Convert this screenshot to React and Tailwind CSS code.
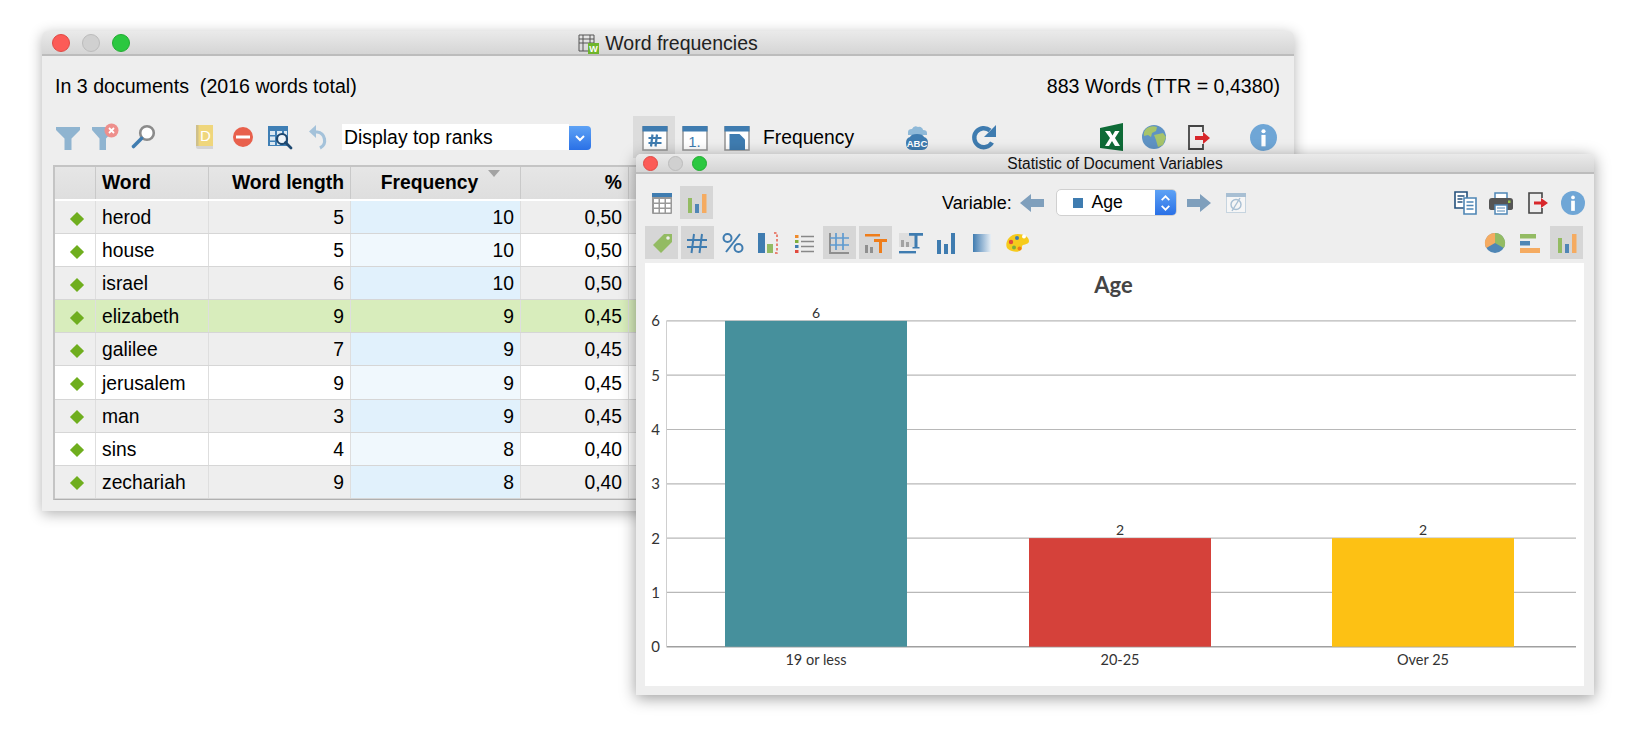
const sans = "font-['Liberation_Sans',Arial,sans-serif]";

function Icon({ children, w = 30, h = 30, className = "" }) {
  return (
    <svg width={w} height={h} viewBox={`0 0 ${w} ${h}`} className={`shrink-0 ${className}`}>
      {children}
    </svg>
  );
}

const Funnel = () => (
  <Icon><path d="M3 5h24v3l-8.500 8.500V28h-7V16.500L3 8z" fill="#8fb4d0" /></Icon>
);

const FunnelX = () => (
  <Icon>
    <path d="M2 5h22v3l-8 8.500V28h-6.500V16.500L2 8z" fill="#8fb4d0" />
    <circle cx="21.500" cy="8.500" r="7" fill="#ee8f8c" />
    <path d="M19 6l5 5m0-5l-5 5" stroke="#fff" strokeWidth="1.800" />
  </Icon>
);

const Magnifier = () => (
  <Icon>
    <circle cx="19" cy="11" r="6.800" fill="#fff" stroke="#8b8b8b" strokeWidth="2.600" />
    <path d="M13.500 16.500L5.500 24.500" stroke="#3f7cb0" strokeWidth="3.600" strokeLinecap="round" />
  </Icon>
);

const Book = () => (
  <Icon>
    <path d="M8 3h16v21H8z" fill="#efd67c" />
    <path d="M7 24h17v3H9q-2 0-2-2z" fill="#d4d4d4" />
    <path d="M7 3h2.500v21H7z" fill="#cfc08a" />
    <text x="16.500" y="19" fontSize="15" fill="#fff" textAnchor="middle" fontFamily="Liberation Sans">D</text>
  </Icon>
);

const MinusCircle = () => (
  <Icon>
    <circle cx="15" cy="15" r="10" fill="#e8604c" />
    <rect x="8" y="13.500" width="14" height="3" fill="#fff" />
  </Icon>
);

const TableSearch = () => (
  <Icon>
    <path d="M4 4h20v20H4z" fill="#3f7fb5" />
    <path d="M6 9h5v4H6zm7 0h5v4h-5zm7 0h3v4h-3zM6 14.500h5v4H6zm0 5.500h5v3H6zm7 0h3v3h-3z" fill="#dbe8f2" />
    <circle cx="18" cy="17" r="5" fill="#eef4f9" stroke="#1e4870" strokeWidth="2.200" />
    <path d="M21.500 20.500L27 26" stroke="#1e4870" strokeWidth="2.800" strokeLinecap="round" />
  </Icon>
);

const Undo = () => (
  <Icon>
    <path d="M13 10h3a8.500 8.500 0 0 1 3 16" fill="none" stroke="#a4c2da" strokeWidth="3.200" />
    <path d="M15 3v13L8 9.500z" fill="#a4c2da" />
  </Icon>
);

const TableMode = ({ children }) => (
  <Icon>
    <rect x="4" y="5" width="24" height="23" fill="#fff" stroke="#9a9a9a" strokeWidth="1.600" />
    <rect x="3.500" y="4" width="25" height="5.500" fill="#3f7cb0" />
    {children}
  </Icon>
);

const CloudAbc = () => (
  <Icon>
    <path d="M6 10q0-3 4-3 2-4 6-2 2-1 4 1 1 1 1 2 4 0 4 3v2H6z" fill="#8fb9d8" />
    <path d="M4 21q0-5 4-6 1-3 7-3t7 3q4 1 4 6 0 7-6 7H10q-6 0-6-7z" fill="#3f7cb0" />
    <text x="15" y="24.500" fontSize="9.500" fontWeight="700" fill="#fff" textAnchor="middle" fontFamily="Liberation Sans">ABC</text>
  </Icon>
);

const Refresh = () => (
  <Icon>
    <path d="M23 20.500a9.500 9.500 0 1 1-2-12" fill="none" stroke="#3f7cb0" strokeWidth="4.400" />
    <path d="M27 3v12H15z" fill="#3f7cb0" />
  </Icon>
);

const Excel = () => (
  <Icon>
    <path d="M3 6l23-5v28L3 26z" fill="#0e6b37" />
    <path d="M8 9h5l2.500 4.500L18 9h4.500l-4.500 7 5 8h-5l-3-5-3 5H8l5-8z" fill="#fff" />
  </Icon>
);

const Globe = () => (
  <Icon>
    <circle cx="15" cy="15" r="12" fill="#5f93c4" />
    <path d="M8 6q5-3 10-1l-1 4-4 2-1 4-3-2-4 1q-1-5 3-8zM15 13l9-2 3 4-3 8-5 2-2-7z" fill="#a7c46a" />
  </Icon>
);

const ExitIcon = () => (
  <Icon>
    <path d="M20 10V4H6v23h14v-5" fill="none" stroke="#444" strokeWidth="1.800" />
    <path d="M12 14h8v-4l7 6-7 6v-4h-8z" fill="#d8272b" />
  </Icon>
);

const Info = ({ size = 27 }) => (
  <svg width={size} height={size} viewBox="0 0 26 26" className="shrink-0">
    <circle cx="13" cy="13" r="13" fill="#6fa6d6" />
    <circle cx="13" cy="7" r="2" fill="#fff" />
    <rect x="11" y="10.500" width="4" height="11" fill="#fff" />
  </svg>
);

const Diamond = () => <div className="w-[10px] h-[10px] rotate-45 bg-[#6fae1e]" />;

const Stepper = ({ double }) => (
  <svg width="22" height="26" viewBox="0 0 22 26">
    {double ? (
      <path d="M7 10l4-4 4 4M7 16l4 4 4-4" fill="none" stroke="#fff" strokeWidth="1.800" />
    ) : (
      <path d="M7 11l4 4 4-4" fill="none" stroke="#fff" strokeWidth="2" />
    )}
  </svg>
);

function Dots({ size }) {
  const gap = size === "lg" ? "gap-[12px] pl-[10px]" : "gap-[9.500px] pl-[7px]";
  const dot = size === "lg" ? "w-[18px] h-[18px]" : "w-[15px] h-[15px]";
  return (
    <div className={`absolute left-0 top-0 bottom-0 flex items-center ${gap}`}>
      <div className={`${dot} rounded-full bg-[#fc5b57] border border-[#e04a45]`} />
      <div className={`${dot} rounded-full bg-[#d0d0d0] border border-[#bcbcbc]`} />
      <div className={`${dot} rounded-full bg-[#2bc840] border border-[#22ad32]`} />
    </div>
  );
}

const words = [
  ["herod", 5, 10, "0,50"],
  ["house", 5, 10, "0,50"],
  ["israel", 6, 10, "0,50"],
  ["elizabeth", 9, 9, "0,45"],
  ["galilee", 7, 9, "0,45"],
  ["jerusalem", 9, 9, "0,45"],
  ["man", 3, 9, "0,45"],
  ["sins", 4, 8, "0,40"],
  ["zechariah", 9, 8, "0,40"],
];

function WordTable() {
  const cols = "grid grid-cols-[41px_112.500px_142.500px_170px_108px_1fr]";
  const head = "flex items-center h-full border-r border-[#c9c9c9] px-[6px] pt-[1px] font-bold";
  return (
    <div className="ml-[11px] mr-[12px] border-2 border-b border-[#c4c4c4] border-b-[#b0b0b0] text-[19.300px] text-black">
      <div className={`${cols} h-[34px] bg-gradient-to-b from-[#e6e6e6] to-[#dedede] border-b-2 border-white`}>
        <div className={head} />
        <div className={head}>Word</div>
        <div className={`${head} justify-end`}>Word length</div>
        <div className={`${head} justify-center pr-[18px] relative`}>
          Frequency
          <div className="absolute right-[20px] top-[3px] w-0 h-0 border-l-[6px] border-r-[6px] border-t-[7px] border-l-transparent border-r-transparent border-t-[#a3a3a3]" />
        </div>
        <div className={`${head} justify-end`}>%</div>
        <div className={head} />
      </div>
      {words.map((r, i) => {
        const selected = i === 3;
        const odd = i % 2 === 1;
        const bg = selected ? "bg-[#d8edbc]" : odd ? "bg-white" : "bg-[#eeeeee]";
        const freqBg = selected ? "bg-[#d8edbc]" : odd ? "bg-[#f0f8fd]" : "bg-[#e1f1fc]";
        const cell = "flex items-center h-full border-r border-[#dedede] px-[6px] pt-[3px]";
        return (
          <div key={r[0]} className={`${cols} h-[33.100px] border-b border-[#d6d6d6] ${bg}`}>
            <div className={`${cell} justify-center pl-[10px]`}><Diamond /></div>
            <div className={cell}>{r[0]}</div>
            <div className={`${cell} justify-end`}>{r[1]}</div>
            <div className={`${cell} justify-end ${freqBg}`}>{r[2]}</div>
            <div className={`${cell} justify-end`}>{r[3]}</div>
            <div className={cell} />
          </div>
        );
      })}
    </div>
  );
}

function WordWindow() {
  return (
    <div className={`absolute left-[42px] top-[31px] w-[1252px] h-[480px] rounded-t-[6px] bg-[#eeeeee] shadow-[0_3px_14px_rgba(0,0,0,0.3)] ${sans}`}>
      <div className="relative h-[25px] rounded-t-[6px] bg-gradient-to-b from-[#eaeaea] to-[#d5d5d5] border-b-2 border-[#bcbcbc] flex items-center justify-center gap-[6px] text-[19.500px] text-[#222] pt-[3px]">
        <Dots size="lg" />
        <svg width="21" height="22" viewBox="0 0 21 22" className="shrink-0">
          <path d="M1 2h15v16H1zM1 6h15M1 10h15M5 2v16M12 2v16" fill="none" stroke="#555" strokeWidth="1" />
          <rect x="10" y="10" width="11" height="11" fill="#6fb52c" />
          <text x="15.500" y="19" fontSize="9" fill="#fff" fontWeight="700" textAnchor="middle" fontFamily="Liberation Sans">W</text>
        </svg>
        Word frequencies
      </div>
      <div className="h-[60px] flex items-center justify-between pt-[1px] px-[13px] text-[19.600px] text-black whitespace-pre">
        <span>In 3 documents  (2016 words total)</span>
        <span className="pr-[1px]">883 Words (TTR = 0,4380)</span>
      </div>
      <div className="h-[42px] mb-[7px] flex items-center pl-[11px]">
        <Funnel />
        <div className="ml-[7px]"><FunnelX /></div>
        <div className="ml-[8px]"><Magnifier /></div>
        <div className="ml-[31px]"><Book /></div>
        <div className="ml-[9px]"><MinusCircle /></div>
        <div className="ml-[6px]"><TableSearch /></div>
        <div className="ml-[7px]"><Undo /></div>
        <div className="ml-[11px] w-[227px] h-[26px] bg-white flex items-center pl-[2px] pt-[2px] text-[19.400px] text-black">Display top ranks</div>
        <div className="w-[22px] h-[24px] mt-[1px] rounded-r-[4px] bg-gradient-to-b from-[#5ea2f5] to-[#2a70e6] flex items-center justify-center"><Stepper /></div>
        <div className="ml-[42px] w-[42px] h-[42px] bg-[#dcdcdc] flex items-center justify-center">
          <TableMode><path d="M13.500 12.500l-1.500 12m6-12l-1.500 12M9.500 16h13M9.500 21h13" fill="none" stroke="#3f7cb0" strokeWidth="2.200" /></TableMode>
        </div>
        <div className="ml-[4px]"><TableMode><text x="15.500" y="24.500" fontSize="15" fill="#3f7cb0" textAnchor="middle" fontFamily="Liberation Sans">1.</text></TableMode></div>
        <div className="ml-[11.500px]"><TableMode><path d="M8.500 12h10l5.500 5.500V28H8.500z" fill="#3f7cb0" /></TableMode></div>
        <div className="ml-[12.500px] w-[90px] pt-[2px] text-[19.300px] text-black whitespace-nowrap">Frequency</div>
        <div className="ml-[48.500px]"><CloudAbc /></div>
        <div className="ml-[37.500px]"><Refresh /></div>
        <div className="ml-[98px]"><Excel /></div>
        <div className="ml-[11.500px]"><Globe /></div>
        <div className="ml-[14px]"><ExitIcon /></div>
        <div className="ml-[37px]"><Info /></div>
      </div>
      <WordTable />
    </div>
  );
}

const ToolBox = ({ on, children }) => (
  <div className={`w-[33px] h-[33px] shrink-0 flex items-center justify-center ${on ? "bg-[#d6d6d6]" : ""}`}>
    {children}
  </div>
);

const S = ({ children }) => (
  <svg width="26" height="26" viewBox="0 0 26 26" className="shrink-0">{children}</svg>
);

const bars = (
  <S>
    <rect x="4" y="8" width="4" height="15" fill="#93bb63" />
    <rect x="11" y="14" width="4" height="9" fill="#4f86b5" />
    <rect x="18" y="4" width="4.500" height="19" fill="#f5ab61" />
  </S>
);

function DocWindow() {
  return (
    <div className={`absolute left-[636px] top-[154px] w-[958px] h-[541px] bg-[#eeeeee] rounded-t-[5px] shadow-[0_3px_16px_rgba(0,0,0,0.4)] ${sans}`}>
      <div className="relative h-[20px] rounded-t-[5px] bg-gradient-to-b from-[#eaeaea] to-[#d5d5d5] border-b-2 border-[#bcbcbc] flex items-center justify-center text-[15.600px] text-[#111] pt-[2px]">
        <Dots size="sm" />
        Statistic of Document Variables
      </div>
      <div className="mt-[12px] h-[33px] flex items-center pl-[9px] pr-[9px]">
        <ToolBox>
          <S>
            <rect x="3" y="3" width="20" height="21" rx="1" fill="#999" />
            <rect x="3" y="3" width="20" height="4" fill="#3f7cb0" />
            <path d="M5 9h4.500v3.500H5zm6 0h4.500v3.500H11zm6 0h4.500v3.500H17zM5 14h4.500v3.500H5zm6 0h4.500v3.500H11zm6 0h4.500v3.500H17zM5 19h4.500v3.500H5zm6 0h4.500v3.500H11zm6 0h4.500v3.500H17z" fill="#fff" />
          </S>
        </ToolBox>
        <div className="ml-[2px]"><ToolBox on>{bars}</ToolBox></div>
        <div className="ml-[229px] w-[70px] pt-[2px] text-[18px] text-black whitespace-nowrap">Variable:</div>
        <svg width="26" height="20" viewBox="0 0 26 20" className="ml-[6.500px] shrink-0"><path d="M1 10l11-9v5h13v8H12v5z" fill="#7f9fbc" /></svg>
        <div className="ml-[11px] w-[121px] h-[27px] flex rounded-[5px] border border-[#d0d0d0] bg-white overflow-hidden">
          <div className="flex-1 flex items-center pl-[16px] gap-[9px] text-[17.600px] text-black">
            <div className="w-[10px] h-[10px] bg-[#3f7cb0]" />
            Age
          </div>
          <div className="w-[21px] bg-gradient-to-b from-[#5ea2f5] to-[#2a70e6] flex items-center justify-center"><Stepper double /></div>
        </div>
        <svg width="26" height="20" viewBox="0 0 26 20" className="ml-[9px] shrink-0"><path d="M25 10l-11-9v5H1v8h13v5z" fill="#7f9fbc" /></svg>
        <div className="ml-[11px]">
          <svg width="26" height="26" viewBox="0 0 26 26" className="shrink-0">
            <rect x="3.500" y="3.500" width="19" height="19" fill="#f6f6f6" stroke="#c6d4df" />
            <rect x="3" y="3" width="20" height="4" fill="#a8bfd3" />
            <circle cx="13" cy="14.500" r="5" fill="none" stroke="#a8bfd3" strokeWidth="1.400" />
            <path d="M9 21l8-13" stroke="#a8bfd3" strokeWidth="1.400" />
          </svg>
        </div>
        <div className="ml-auto flex items-center gap-[10px]">
          <S>
            <path d="M3 2h12v16H3z" fill="#fff" stroke="#24507c" strokeWidth="1.600" />
            <path d="M5.500 6h7M5.500 9h5M5.500 12h5" stroke="#24507c" strokeWidth="1.300" />
            <path d="M12 8h12v16H12z" fill="#fff" stroke="#4f86b5" strokeWidth="1.600" />
            <path d="M14.500 12h7M14.500 15.500h7M14.500 19h7" stroke="#4f86b5" strokeWidth="1.300" />
          </S>
          <S>
            <path d="M7 3h12v6H7z" fill="#fff" stroke="#4f86b5" strokeWidth="1.500" />
            <path d="M4 8h18q3 0 3 3v7q0 2-3 2H4q-3 0-3-2v-7q0-3 3-3z" fill="#555" />
            <path d="M7 15h12v9H7z" fill="#fff" stroke="#4f86b5" strokeWidth="1.500" />
            <path d="M9 18h8M9 21h8" stroke="#4f86b5" />
            <rect x="20" y="10.500" width="2.500" height="2.500" fill="#9ccb4a" />
          </S>
          <S>
            <path d="M18 8V3H5v20h13v-5" fill="none" stroke="#444" strokeWidth="1.600" />
            <path d="M10 11.500h7V8l7 5-7 5v-3.500h-7z" fill="#d8272b" />
          </S>
          <div className="ml-[1px]"><Info size={24} /></div>
        </div>
      </div>
      <div className="mt-[7px] h-[33px] flex items-center gap-[2.600px] pl-[9px] pr-[11px]">
        <ToolBox on>
          <S>
            <path d="M4 15L15 4h8v8L12 23z" fill="#93bb63" />
            <circle cx="19" cy="8" r="1.800" fill="#eee" />
          </S>
        </ToolBox>
        <ToolBox on><S><path d="M10 4L7.500 23M18 4l-2.500 19M3 10h20M3 17h20" fill="none" stroke="#3f7cb0" strokeWidth="2" /></S></ToolBox>
        <ToolBox><S><circle cx="7.500" cy="8" r="4" fill="none" stroke="#3f7cb0" strokeWidth="2" /><circle cx="18.500" cy="18" r="4" fill="none" stroke="#3f7cb0" strokeWidth="2" /><path d="M20 4L6 22" stroke="#3f7cb0" strokeWidth="2" /></S></ToolBox>
        <ToolBox>
          <S>
            <rect x="3" y="3" width="7" height="20" fill="#3f7cb0" />
            <rect x="12" y="14" width="6" height="9" fill="#93bb63" />
            <path d="M19 3h3v20h-3" fill="none" stroke="#e8604c" strokeWidth="1.500" strokeDasharray="2.500 2" />
          </S>
        </ToolBox>
        <ToolBox>
          <S>
            <rect x="4" y="5" width="3.500" height="3" fill="#ef8b2c" />
            <rect x="4" y="10" width="3.500" height="3" fill="#7fae3a" />
            <rect x="4" y="15" width="3.500" height="3" fill="#3f7cb0" />
            <rect x="4" y="20" width="3.500" height="3" fill="#e14a3e" />
            <path d="M10 6.500h13M10 11.500h13M10 16.500h13M10 21.500h13" stroke="#888" strokeWidth="1.600" />
          </S>
        </ToolBox>
        <ToolBox on>
          <S>
            <path d="M4 3v20h19" fill="none" stroke="#8f8f8f" strokeWidth="2" />
            <path d="M10 3v17M17 3v17M4 8h19M4 15h19" fill="none" stroke="#5f9bd0" strokeWidth="1.700" />
          </S>
        </ToolBox>
        <ToolBox on>
          <S>
            <rect x="3" y="4" width="15" height="2.500" fill="#ef7d1a" />
            <rect x="3" y="15" width="3" height="8" fill="#8f8f8f" />
            <rect x="8" y="17" width="3" height="6" fill="#8f8f8f" />
            <path d="M12 9h13v3h-5v11h-3V12h-5z" fill="#ef7d1a" />
          </S>
        </ToolBox>
        <ToolBox>
          <S>
            <rect x="1" y="3" width="17" height="14" fill="#dedede" />
            <rect x="3" y="10" width="3" height="7" fill="#a3a3a3" />
            <rect x="8" y="12" width="3" height="5" fill="#a3a3a3" />
            <path d="M11 3h14v2.800h-5.500V17h2v1.500h-7V17h2V5.800H11z" fill="#3f7cb0" />
            <rect x="1" y="21" width="17" height="2.400" fill="#3f7cb0" />
          </S>
        </ToolBox>
        <ToolBox>
          <S>
            <rect x="4" y="10" width="4" height="14" fill="#3f7cb0" />
            <rect x="11" y="14" width="4" height="10" fill="#3f7cb0" />
            <rect x="18" y="3" width="4" height="21" fill="#3f7cb0" />
          </S>
        </ToolBox>
        <ToolBox>
          <div className="w-[18px] h-[18px] bg-gradient-to-r from-[#3f7cb0] to-[#e8eff5]" />
        </ToolBox>
        <ToolBox>
          <S>
            <path d="M14 4c6 0 11 3 11 7 0 3-3 3-6 4-2 1 0 3-2 5-3 3-9 2-13-1C0 16 3 4 14 4z" fill="#f6cb1c" />
            <circle cx="13" cy="8" r="2" fill="#3f7cb0" />
            <circle cx="20" cy="6.500" r="2" fill="#fff" />
            <circle cx="7" cy="12" r="2.200" fill="#e14a3e" />
            <circle cx="10" cy="17.500" r="2" fill="#7fae3a" />
            <circle cx="15.500" cy="18.500" r="2" fill="#ef7d1a" />
          </S>
        </ToolBox>
        <div className="ml-auto flex items-center gap-[2px]">
          <ToolBox>
            <S>
              <circle cx="13" cy="13" r="10" fill="#4f86b5" />
              <path d="M13 13V3a10 10 0 0 1 8.700 15z" fill="#93bb63" />
              <path d="M13 13V3a10 10 0 0 0-8.700 15z" fill="#f5ab61" />
            </S>
          </ToolBox>
          <ToolBox>
            <S>
              <rect x="3" y="4" width="16" height="4.500" fill="#93bb63" />
              <rect x="3" y="11" width="10" height="4.500" fill="#4f86b5" />
              <rect x="3" y="18" width="20" height="5" fill="#f5ab61" />
            </S>
          </ToolBox>
          <div className="ml-[2px]"><ToolBox on>{bars}</ToolBox></div>
        </div>
      </div>
      <div className="mt-[3.500px] ml-[9px] mr-[10px] h-[423.500px] bg-white">
        <AgeChart />
      </div>
    </div>
  );
}

function AgeChart() {
  const y0 = 383.7;
  const step = 54.3;
  const data = [
    { label: "19 or less", value: 6, x: 80, color: "#46909c" },
    { label: "20-25", value: 2, x: 384, color: "#d5413a" },
    { label: "Over 25", value: 2, x: 687, color: "#fdc114" },
  ];
  const ticks = [0, 1, 2, 3, 4, 5, 6];
  return (
    <svg width="939" height="423" viewBox="0 0 939 423" fontFamily="Lato, sans-serif">
      <text x="468.500" y="30" textAnchor="middle" fontSize="22" fontWeight="700" fill="#444">Age</text>
      {ticks.map((t) => (
        <g key={t}>
          <line x1="21.500" x2="931" y1={y0 - t * step} y2={y0 - t * step} stroke={t === 0 ? "#a0a0a0" : "#b8b8b8"} strokeWidth={t === 0 ? 1.5 : 1.2} />
          <text x="15" y={y0 - t * step + 5.500} textAnchor="end" fontSize="15" fill="#333">{t}</text>
        </g>
      ))}
      <line x1="21.500" x2="21.500" y1={y0 - 6 * step} y2={y0} stroke="#cfcfcf" />
      {data.map((d) => (
        <g key={d.label}>
          <rect x={d.x} y={y0 - d.value * step} width="182" height={d.value * step} fill={d.color} />
          <text x={d.x + 91} y={y0 - d.value * step - 3} textAnchor="middle" fontSize="14" fill="#333">{d.value}</text>
          <text x={d.x + 91} y="402" textAnchor="middle" fontSize="14.500" fill="#333">{d.label}</text>
        </g>
      ))}
    </svg>
  );
}

export default function App() {
  return (
    <div className="relative w-[1633px] h-[737px] bg-white overflow-hidden">
      <WordWindow />
      <DocWindow />
    </div>
  );
}
